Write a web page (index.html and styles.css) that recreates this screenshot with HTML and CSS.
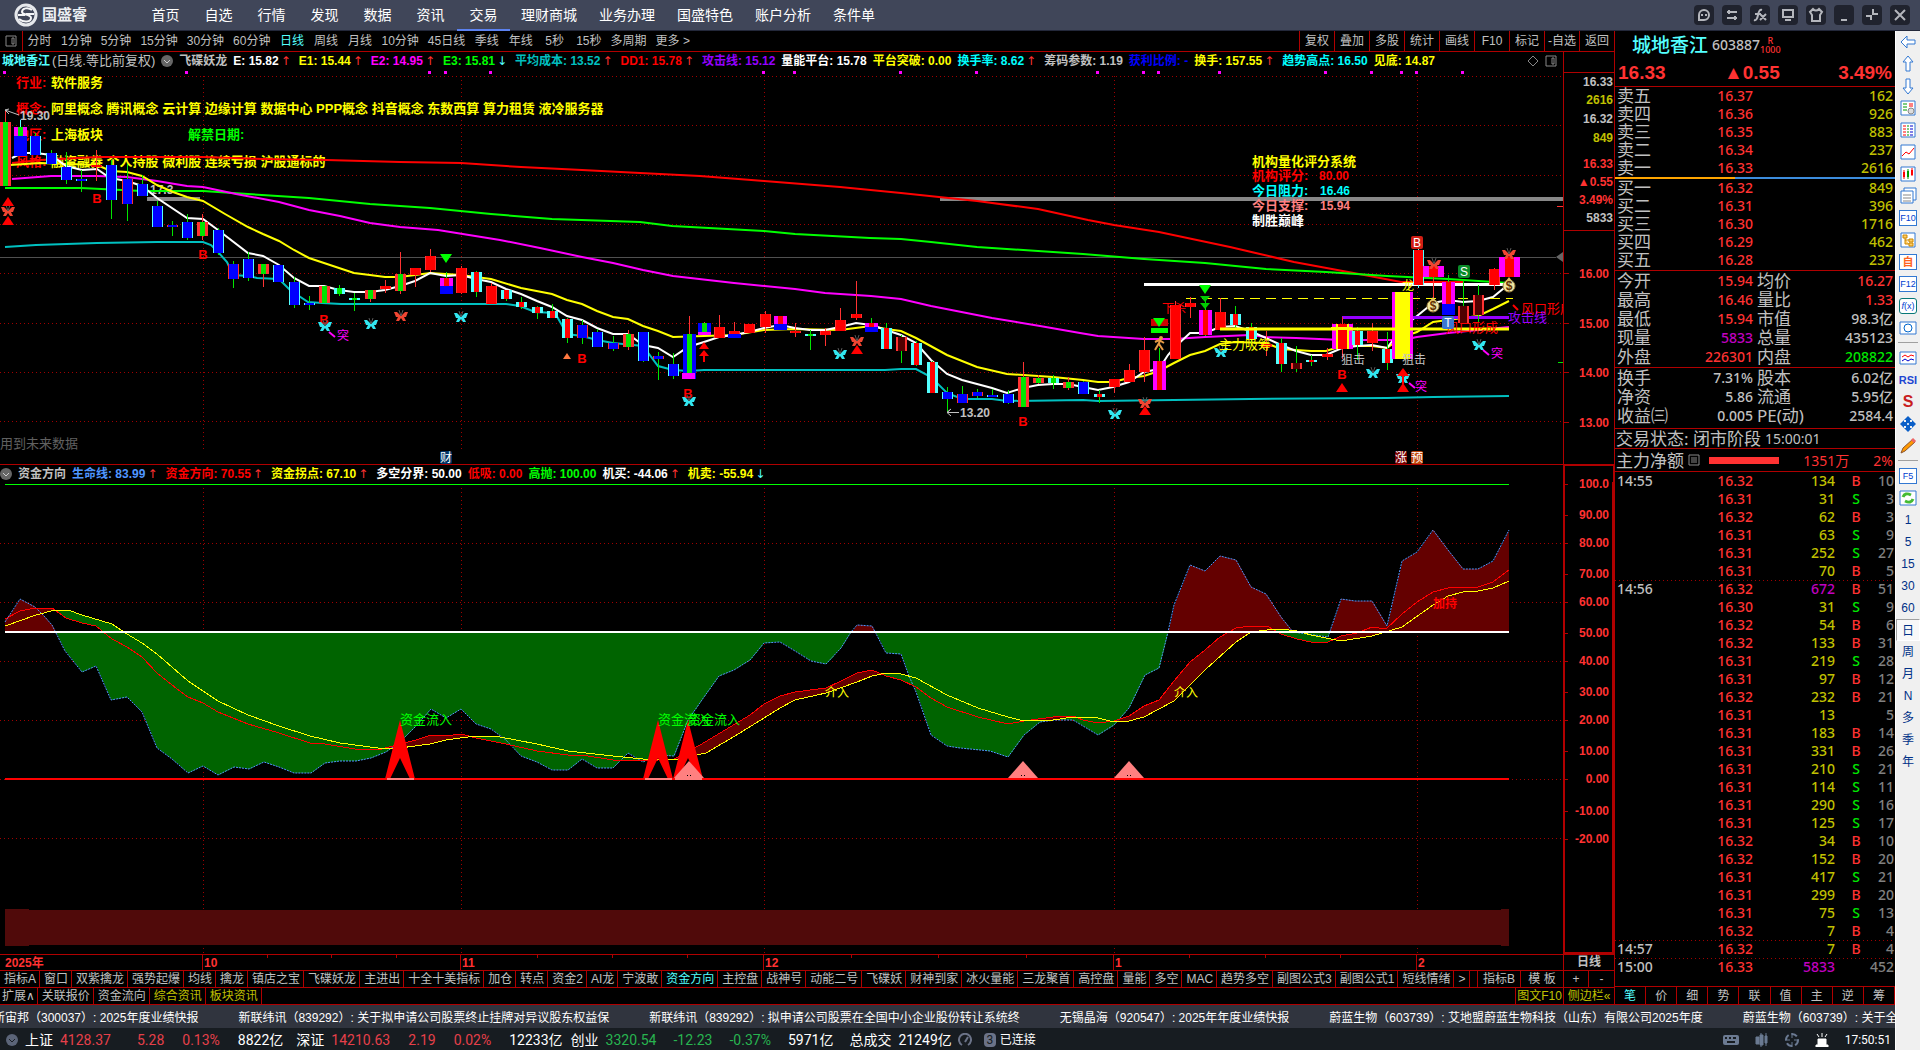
FILE: index.html
```html
<!DOCTYPE html>
<html lang="zh-CN">
<head>
<meta charset="utf-8">
<title>国盛睿 - 城地香江 603887</title>
<link rel="stylesheet" href="styles.css">
</head>
<body>
<header class="topbar">
	<div class="logo">
		<svg width="26" height="24" viewBox="0 0 26 24"><circle cx="13" cy="12" r="10" fill="none" stroke="#e6e8ec" stroke-width="3"/><path d="M19 7C15 4 9 5 9 9c0 3 9 2 9 6 0 4-7 5-12 1M21 11h-8M5 12h7" fill="none" stroke="#f4f5f7" stroke-width="2"/></svg>
		<b>国盛睿</b>
	</div>
	<nav class="nav">
		<a href="#">首页</a><a href="#">自选</a><a href="#">行情</a><a href="#">发现</a><a href="#">数据</a><a href="#">资讯</a><a href="#" class="on">交易</a><a href="#">理财商城</a><a href="#">业务办理</a><a href="#">国盛特色</a><a href="#">账户分析</a><a href="#">条件单</a>
	</nav>
	<div class="winbtns">
		<button aria-label="客服"><svg viewBox="0 0 20 20"><path d="M5 15v-5a5 5 0 1 1 5 5zM8 9v2M12 9v2"/></svg></button>
		<button aria-label="切换"><svg viewBox="0 0 20 20"><path d="M5 7h10M5 13h10M7 5v4M13 11v4"/></svg></button>
		<button aria-label="公式"><svg viewBox="0 0 20 20"><path d="M4 15q3 1 4-5t4-5M5 9h6M10 9l6 6M16 9l-6 6"/></svg></button>
		<button aria-label="屏幕"><svg viewBox="0 0 20 20"><path d="M5 5h10v7H5zM7 15h6"/></svg></button>
		<button aria-label="换肤"><svg viewBox="0 0 20 20"><path d="M7 4q3 3 6 0l3 3-2 3v6H6v-6L4 7z"/></svg></button>
		<button aria-label="最小化"><svg viewBox="0 0 20 20"><path d="M7 15h6"/></svg></button>
		<button aria-label="还原"><svg viewBox="0 0 20 20"><path d="M4 11h5v4M11 4v5h5"/></svg></button>
		<button aria-label="关闭"><svg viewBox="0 0 20 20"><path d="M5 5l10 10M15 5L5 15"/></svg></button>
	</div>
</header>
<div class="body">
<main class="work">
<div class="middle">
<section class="charts">
	<div class="periods">
		<button class="split" aria-label="面板"><svg width="12" height="12" viewBox="0 0 12 12"><path d="M1 1h10v10H1zM7 3h2v6H7z" fill="none" stroke="#888"/></svg></button>
		<div class="plist">
			<button>分时</button><button>1分钟</button><button>5分钟</button><button>15分钟</button><button>30分钟</button><button>60分钟</button><button class="on">日线</button><button>周线</button><button>月线</button><button>10分钟</button><button>45日线</button><button>季线</button><button>年线</button><button>5秒</button><button>15秒</button><button>多周期</button><button>更多 &gt;</button>
		</div>
		<div class="tools">
			<button>复权</button><button>叠加</button><button>多股</button><button>统计</button><button>画线</button><button>F10</button><button>标记</button><button>-自选</button><button>返回</button>
		</div>
	</div>
	<div class="ind">
		<span class="c-cyan">城地香江</span><span class="c-gray thin">(日线.等比前复权)</span>
		<svg class="dd" viewBox="0 0 12 12"><circle cx="6" cy="6" r="6" fill="#666"/><path d="M3 5l3 3 3-3" fill="none" stroke="#ccc"/></svg>
		<span class="c-gray">飞碟妖龙</span>
		<span class="c-white up">E: 15.82</span><span class="c-yel up">E1: 15.44</span><span class="c-mag up">E2: 14.95</span><span class="c-grn down">E3: 15.81</span><span class="c-teal up">平均成本: 13.52</span><span class="c-red up">DD1: 15.78</span><span class="c-pur">攻击线: 15.12</span><span class="c-white">量能平台: 15.78</span><span class="c-yel">平台突破: 0.00</span><span class="c-aqua up">换手率: 8.62</span><span class="c-gray">筹码参数: 1.19</span><span class="c-blue">获利比例: -</span><span class="c-yel up">换手: 157.55</span><span class="c-aqua">趋势高点: 16.50</span><span class="c-yel">见底: 14.87</span>
		<svg class="marks" width="40" height="14" viewBox="0 0 40 14"><path d="M10 2l5 5-5 5-5-5zM23 2h10v10H23zM29 4h2v6h-2z" fill="none" stroke="#888"/></svg>
		<i class="gutter"></i>
	</div>
	<svg class="kline" id="kline" viewBox="0 70 1614 394" preserveAspectRatio="xMinYMin meet"></svg>
	<div class="ind sub">
		<svg class="dd" viewBox="0 0 12 12"><circle cx="6" cy="6" r="6" fill="#666"/><path d="M3 5l3 3 3-3" fill="none" stroke="#ccc"/></svg>
		<span class="c-gray">资金方向</span><span class="c-sky up">生命线: 83.99</span><span class="c-red up">资金方向: 70.55</span><span class="c-yel up">资金拐点: 67.10</span><span class="c-white">多空分界: 50.00</span><span class="c-red">低吸: 0.00</span><span class="c-grn">高抛: 100.00</span><span class="c-white up">机买: -44.06</span><span class="c-yel down">机卖: -55.94</span>
		<i class="gutter thick"></i>
	</div>
	<svg class="fund" id="fund" viewBox="0 482 1614 472" preserveAspectRatio="xMinYMin meet"></svg>
	<div class="dates"><svg id="dates" height="15"></svg><span>日线</span></div>
	<div class="tabs">
		<button>指标A</button><button>窗口</button><button>双紫擒龙</button><button>强势起爆</button><button>均线</button><button>擒龙</button><button>镇店之宝</button><button>飞碟妖龙</button><button>主进出</button><button>十全十美指标</button><button>加仓</button><button>转点</button><button>资金2</button><button>AI龙</button><button>宁波敢</button><button class="on">资金方向</button><button>主控盘</button><button>战神号</button><button>动能二号</button><button>飞碟妖</button><button>财神到家</button><button>冰火量能</button><button>三龙聚首</button><button>高控盘</button><button>量能</button><button>多空</button><button>MAC</button><button>趋势多空</button><button>副图公式3</button><button>副图公式1</button><button>短线情绪</button><button>&gt;</button>
		<div class="right"><button class="w43">指标B</button><button class="w43">模 板</button><button class="w25">+</button><button class="w25">-</button></div>
	</div>
	<div class="tabs ext">
		<button class="more">扩展∧</button><button>关联报价</button><button>资金流向</button><button class="y">综合资讯</button><button class="y">板块资讯</button>
		<div class="right"><button class="y w48">图文F10</button><button class="y w50">侧边栏«</button></div>
	</div>
</section>
<aside class="quote">
	<div class="name"><b>城地香江</b><span>603887</span><small>R<br>1000</small></div>
	<div class="last"><b>16.33</b><b>▲0.55</b><b>3.49%</b></div>
	<table class="book sell">
		<tr><th>卖五</th><td>16.37</td><td>162</td></tr>
		<tr><th>卖四</th><td>16.36</td><td>926</td></tr>
		<tr><th>卖三</th><td>16.35</td><td>883</td></tr>
		<tr><th>卖二</th><td>16.34</td><td>237</td></tr>
		<tr><th>卖一</th><td>16.33</td><td>2616</td></tr>
	</table>
	<div class="ratio"></div>
	<table class="book">
		<tr><th>买一</th><td>16.32</td><td>849</td></tr>
		<tr><th>买二</th><td>16.31</td><td>396</td></tr>
		<tr><th>买三</th><td>16.30</td><td>1716</td></tr>
		<tr><th>买四</th><td>16.29</td><td>462</td></tr>
		<tr><th>买五</th><td>16.28</td><td>237</td></tr>
	</table>
	<table class="info">
		<tr><th>今开</th><td class="r">15.94</td><th>均价</th><td class="r">16.27</td></tr>
		<tr><th>最高</th><td class="r">16.46</td><th>量比</th><td class="r">1.33</td></tr>
		<tr><th>最低</th><td class="r">15.94</td><th>市值</th><td>98.3亿</td></tr>
		<tr><th>现量</th><td class="m">5833</td><th>总量</th><td>435123</td></tr>
		<tr><th>外盘</th><td class="r">226301</td><th>内盘</th><td class="g">208822</td></tr>
	</table>
	<table class="info last3">
		<tr><th>换手</th><td>7.31%</td><th>股本</th><td>6.02亿</td></tr>
		<tr><th>净资</th><td>5.86</td><th>流通</th><td>5.95亿</td></tr>
		<tr><th>收益㈢</th><td>0.005</td><th>PE(动)</th><td>2584.4</td></tr>
	</table>
	<div class="state">交易状态: 闭市阶段 <span>15:00:01</span></div>
	<div class="net">主力净额<svg width="12" height="12" viewBox="0 0 12 12"><path d="M1 1h10v10H1zM3 4h6M3 6h6M3 8h6" fill="none" stroke="#888"/></svg><i></i><span>1351万</span><em>2%</em></div>
	<table class="tape" id="tape"></table>
	<div class="qtabs"><button class="on">笔</button><button>价</button><button>细</button><button>势</button><button>联</button><button>值</button><button>主</button><button>逆</button><button>筹</button></div>
</aside>
</div>
<div class="ticker">
	<a href="#">新宙邦（300037）: 2025年度业绩快报</a><a href="#">新联纬讯（839292）: 关于拟申请公司股票终止挂牌对异议股东权益保</a><a href="#">新联纬讯（839292）: 拟申请公司股票在全国中小企业股份转让系统终</a><a href="#">无锡晶海（920547）: 2025年年度业绩快报</a><a href="#">蔚蓝生物（603739）: 艾地盟蔚蓝生物科技（山东）有限公司2025年度</a><a href="#">蔚蓝生物（603739）: 关于全</a>
</div>
<footer class="status">
	<svg class="dd" viewBox="0 0 12 12"><circle cx="6" cy="6" r="6" fill="#5b6478"/><path d="M3 5l3 3 3-3" fill="none" stroke="#1a1e24"/></svg>
	<div class="idx up"><b>上证</b><span class="p">4128.37</span><span>5.28</span><span>0.13%</span><b>8822亿</b></div>
	<div class="idx up"><b>深证</b><span class="p">14210.63</span><span>2.19</span><span>0.02%</span><b>12233亿</b></div>
	<div class="idx dn"><b>创业</b><span>3320.54</span><span>-12.23</span><span>-0.37%</span><b>5971亿</b></div>
	<div class="idx total"><b>总成交</b><b>21249亿</b></div>
	<svg width="14" height="14" viewBox="0 0 14 14"><path d="M4 12a6 6 0 1 1 6 0M7 9l3-5" fill="none" stroke="#6b7388" stroke-width="2"/></svg>
	<span class="num">3</span><span class="conn">已连接</span>
	<div class="sysicons">
		<svg width="16" height="12" viewBox="0 0 16 12"><rect y="1" width="16" height="10" rx="2" fill="#6b7a92"/><path d="M2 4h2M6 4h2M10 4h3M4 8h8" stroke="#171c21" stroke-width="2"/></svg>
		<svg width="14" height="14" viewBox="0 0 14 14"><path d="M1 4h3v7H1zM5 2h3v10H5zM10 3h2v7h-2zM11 0v13M6 0v14" fill="#6b7a92" stroke="#6b7a92"/></svg>
		<svg width="14" height="14" viewBox="0 0 14 14"><circle cx="7" cy="7" r="6" fill="none" stroke="#6b7a92" stroke-width="2" stroke-dasharray="6 3"/><path d="M7 0v5M7 9v5M0 7h5M9 7h5" stroke="#6b7a92"/></svg>
		<svg width="14" height="14" viewBox="0 0 14 14"><path d="M3 6h8v6H3zM1 12h12v2H1zM2 1l2 3M7 0v4M12 1l-2 3" fill="#fff" stroke="#fff"/></svg>
		<time>17:50:51</time>
	</div>
</footer>
</main>
<aside class="strip">
	<button aria-label="返回"><svg viewBox="0 0 20 20"><path class="l" d="M3 10l6-6v4h8v4H9v4z"/></svg></button>
	<button aria-label="上翻"><svg viewBox="0 0 20 20"><path class="l" d="M10 2l5 6h-3v9H8V8H5z"/></svg></button>
	<button aria-label="下翻"><svg viewBox="0 0 20 20"><path class="l" d="M10 18l5-6h-3V3H8v9H5z"/></svg></button>
	<button aria-label="行情表"><svg viewBox="0 0 20 20"><path class="l" d="M3 3h14v14H3z"/><path d="M5 6h4M5 9h4M5 12h4" stroke="#090"/><path d="M11 6h4M11 8h4" stroke="red"/><circle cx="13" cy="13" r="3" fill="#ddd" stroke="#888"/></svg></button>
	<button aria-label="报价"><svg viewBox="0 0 20 20"><path class="l" d="M3 3h14v14H3z"/><path d="M5 6h3M5 9h3M5 12h3M5 15h3" stroke="red"/><path d="M9 6h2M9 9h2M9 12h2M9 15h2" stroke="#090"/><path d="M12 6h3M12 9h3M12 12h3M12 15h3" stroke="#00c"/></svg></button>
	<button aria-label="分时图"><svg viewBox="0 0 20 20"><path class="l" d="M3 3h14v14H3z"/><path d="M4 14l4-4 3 2 5-6" stroke="red" fill="none"/></svg></button>
	<button aria-label="K线图"><svg viewBox="0 0 20 20"><path class="l" d="M3 3h14v14H3z"/><path d="M6 6v9M14 4v8" stroke="red"/><path d="M10 5v10" stroke="#090"/><path d="M5 8h2v5H5zM13 6h2v5h-2z" fill="red"/><path d="M9 7h2v6H9z" fill="#090"/></svg></button>
	<button aria-label="窗口"><svg viewBox="0 0 20 20"><path class="l" d="M6 2h12v12H6z"/><path class="l" d="M3 5h12v12H3z"/><path d="M5 9h8M5 12h8M5 15h8" stroke="#888"/></svg></button>
	<button class="box">F10</button>
	<button aria-label="结构"><svg viewBox="0 0 20 20"><path class="l" d="M3 3h14v14H3z"/><path d="M5 5h4v3H5zM11 9h4v3h-4zM11 13h4v3h-4zM7 8v6h4M7 10h4" fill="#fc6" stroke="#c80"/></svg></button>
	<button class="box org">自</button>
	<button class="box">F12</button>
	<button class="box fx"><i>f</i>(x)</button>
	<button aria-label="圈"><svg viewBox="0 0 20 20"><path class="l" d="M2 4h16v12H2z"/><circle cx="10" cy="10" r="4" fill="none" stroke="#06c"/></svg></button>
	<hr>
	<button aria-label="叠加"><svg viewBox="0 0 20 20"><path class="l" d="M2 4h16v12H2z"/><path d="M4 9l3-2 3 2 3-2 3 1" stroke="red" fill="none"/><path d="M4 13l3-2 3 2 3-2 3 1" stroke="#00c" fill="none"/></svg></button>
	<button class="rsi">RSI</button>
	<button class="dollar">S</button>
	<button aria-label="移动"><svg viewBox="0 0 20 20"><path d="M10 2l4 4h-2v2h2V6l4 4-4 4v-2h-2v2h2l-4 4-4-4h2v-2H6v2l-4-4 4-4v2h2V6H6z" fill="#0a5fc8"/><circle cx="10" cy="10" r="1" fill="#fff"/></svg></button>
	<button aria-label="画线"><svg viewBox="0 0 20 20"><path d="M3 17l2-5L15 3l2 3L7 15z" fill="#f90" stroke="#853"/><path d="M14 3l3 3" stroke="#e66" stroke-width="3"/></svg></button>
	<hr>
	<button class="box">F5</button>
	<button aria-label="刷新"><svg viewBox="0 0 20 20"><path class="l" d="M2 3h16v14H2z"/><path d="M5 9q2-5 8-2M15 11q-2 5-8 2" fill="none" stroke="#4b3" stroke-width="3"/></svg></button>
	<button>1</button><button>5</button><button>15</button><button>30</button><button>60</button><button class="on">日</button><button>周</button><button>月</button><button>N</button><button>多</button><button>季</button><button>年</button>
</aside>
</div>
<script src="script.js"></script>
</body>
</html>
```
FILE: styles.css
```css
* {
	box-sizing:border-box;
}
body {
	margin:0;
	height:100vh;
	display:flex;
	flex-direction:column;
	overflow:hidden;
	background:#000;
	color:#c0c0c0;
	font:12px/16px 'Liberation Sans','Noto Sans CJK SC',sans-serif;
}
button {
	margin:0;
	padding:0;
	border:0;
	background:none;
	color:inherit;
	font:inherit;
	white-space:nowrap;
}
a {
	color:inherit;
	text-decoration:none;
}
table {
	border-collapse:separate;
	border-spacing:0;
	width:100%;
	table-layout:fixed;
}
th, td {
	padding:0;
	font-weight:normal;
}
.topbar {
	flex:none;
	display:flex;
	align-items:center;
	height:31px;
	background:#404659;
	border-bottom:1px solid #23283a;
	color:#fff;
}
.logo {
	display:flex;
	align-items:center;
	width:139px;
	padding-left:13px;
	gap:3px;
	font-size:15px;
	color:#eceef2;
}
.nav {
	display:flex;
	font-size:14px;
	line-height:30px;
}
.nav a {
	min-width:53px;
	padding:0 11px;
	text-align:center;
}
.nav .on {
	border-bottom:2px solid #5c82f0;
	line-height:28px;
	padding-top:1px;
}
.winbtns {
	display:flex;
	gap:8px;
	margin-left:auto;
	padding-right:10px;
}
.winbtns button {
	width:20px;
	height:20px;
	border-radius:4px;
	background:#20232e;
}
.winbtns svg {
	display:block;
	fill:none;
	stroke:#b4b6bc;
	stroke-width:2;
}
.body {
	flex:1;
	display:flex;
	min-height:0;
}
.work {
	flex:1;
	min-width:0;
	display:flex;
	flex-direction:column;
}
.middle {
	flex:1;
	display:flex;
	min-height:0;
}
.charts {
	flex:1;
	min-width:0;
	display:flex;
	flex-direction:column;
	border-right:1px solid #b00000;
}
.periods {
	flex:none;
	display:flex;
	height:21px;
	border-bottom:1px solid #b00000;
	line-height:20px;
}
.split {
	width:23px;
	border-right:1px solid #b00000;
	line-height:0;
}
.plist {
	display:flex;
	gap:9px;
	padding-left:4px;
}
.plist button {
	min-width:25px;
}
.periods .on, .tabs .on, .qtabs .on {
	color:#54ffff;
}
.tools {
	display:flex;
	margin-left:auto;
}
.tools button {
	width:35px;
	border-left:1px solid #b00000;
}
.ind {
	flex:none;
	display:flex;
	align-items:center;
	gap:6px;
	height:18px;
	padding-left:2px;
	line-height:18px;
	font-weight:bold;
	white-space:nowrap;
	overflow:hidden;
}
.ind .thin {
	margin-left:-4px;
	font-size:13px;
	font-weight:normal;
}
.ind.sub {
	padding-left:0;
	border-top:1px solid #b00000;
	line-height:16px;
}
.dd {
	flex:none;
	width:12px;
	height:12px;
}
.up::after, .down::after {
	content:'↑';
	margin:0 2px;
	color:#ff3232;
	font-family:'DejaVu Sans';
	font-weight:normal;
}
.down::after {
	content:'↓';
	color:#54ffff;
}
.idx::after {
	display:none;
}
.marks {
	margin-left:auto;
}
.gutter {
	width:51px;
	align-self:stretch;
	margin-left:-6px;
	border-left:1px solid #b00000;
}
.gutter.thick {
	margin-left:auto;
	border:2px solid #b00000;
	border-width:1px 1px 0 2px;
}
.c-cyan { color:#54ffff; }
.c-gray { color:#c0c0c0; }
.c-white { color:#fff; }
.c-yel { color:#ff0; }
.c-mag { color:#f0f; }
.c-grn { color:#0f0; }
.c-teal { color:#00c0c0; }
.c-red { color:#f00; }
.c-pur { color:#9500ff; }
.c-aqua { color:#0ff; }
.c-blue { color:#00f; }
.c-sky { color:#5096ff; }
.kline, .fund {
	display:block;
	width:100%;
	min-height:0;
	font:bold 12px 'Liberation Sans','Noto Sans CJK SC',sans-serif;
}
.kline {
	flex:394 1 0;
}
.fund {
	flex:472 1 0;
	overflow:visible;
}
.big {
	font-size:13px;
}
.norm {
	font-weight:normal;
}
.dates {
	flex:none;
	display:flex;
	height:16px;
	border-top:1px solid #b00000;
	line-height:15px;
}
.dates svg {
	flex:1;
	min-width:0;
	font:bold 12px 'Liberation Sans','Noto Sans CJK SC',sans-serif;
}
.dates span {
	width:51px;
	text-align:center;
	border-left:1px solid #b00000;
	font-weight:bold;
}
.tabs {
	flex:none;
	display:flex;
	height:17px;
	border-top:1px solid #b00000;
	line-height:16px;
	overflow:hidden;
}
.tabs button {
	padding:0 3px 0 4px;
	border-right:1px solid #b00000;
}
.tabs.ext {
	height:18px;
	border-bottom:1px solid #b00000;
}
.tabs .more {
	padding:0 2px;
	font-family:'DejaVu Sans','Noto Sans CJK SC',sans-serif;
}
.tabs .y {
	color:#c0c000;
}
.tabs .right {
	display:flex;
	margin-left:auto;
	border-left:1px solid #b00000;
}
.tabs .right button {
	padding:0;
}
.right button:last-child {
	border-right:0;
}
.w43 {
	width:43px;
}
.w25 {
	width:25px;
}
.w48 {
	width:48px;
}
.w50 {
	width:50px;
}
.quote {
	flex:none;
	display:flex;
	flex-direction:column;
	width:280px;
	font:500 14px/18px 'Noto Sans','Noto Sans CJK SC',sans-serif;
}
.name {
	display:flex;
	align-items:center;
	height:28px;
	padding-left:17px;
	color:#c0c0c0;
}
.name b {
	color:#54ffff;
	font-size:19px;
	font-weight:500;
	margin-right:4px;
}
.name small {
	color:#ff3232;
	font-size:9px;
	line-height:9px;
	text-align:center;
}
.last {
	display:flex;
	align-items:center;
	justify-content:space-between;
	height:28px;
	padding:0 3px;
	border-bottom:1px solid #b00000;
	color:#ff3232;
	font:bold 19px/26px 'Liberation Sans','DejaVu Sans',sans-serif;
}
.quote th {
	padding-left:2px;
	text-align:left;
	font-size:17px;
	white-space:nowrap;
}
.quote td {
	text-align:right;
	padding-right:2px;
	font-weight:500;
}
.book tr {
	height:18px;
}
.book td {
	color:#c0c000;
}
.book td:nth-child(2) {
	color:#ff3232;
	padding-right:0;
}
.book th {
	width:60px;
}
.book td:nth-child(2) {
	width:78px;
}
.ratio {
	flex:none;
	height:2px;
	background:linear-gradient(to right, #ffa500 43%, #3c8cdc 43%);
}
.info {
	border-top:1px solid #b00000;
	margin-top:1px;
}
.info tr {
	height:19px;
}
.info th, .info td {
	width:68px;
}
.last3 {
	margin-bottom:3px;
}
.state, .net {
	flex:none;
	display:flex;
	align-items:center;
	padding-left:1px;
	border-top:1px solid #b00000;
	font-size:17px;
	font-weight:400;
	line-height:19px;
	height:20px;
	gap:4px;
}
.state span {
	font-size:14px;
}
.net {
	height:24px;
	padding-right:2px;
	border-bottom:1px solid #b00000;
}
.net i {
	width:70px;
	height:7px;
	margin-left:5px;
	background:#ff3232;
}
.net span, .net em {
	color:#ff3232;
	font-size:14px;
	font-style:normal;
	margin-left:auto;
}
.tape tr {
	height:18px;
}
.tape td {
	padding:0;
}
.tape td:nth-child(1) {
	width:50px;
	text-align:left;
	padding-left:2px;
}
.tape td:nth-child(2) {
	width:88px;
	color:#ff3232;
}
.tape td:nth-child(3) {
	width:82px;
	color:#c0c000;
}
.tape td:nth-child(4) {
	width:34px;
	padding-left:8px;
	text-align:center;
}
.tape td:nth-child(5) {
	color:#808080;
	padding-right:1px;
}
.quote .r {
	color:#ff3232;
}
.quote .g {
	color:#00e600;
}
.quote td.m, .tape td.m:nth-child(3) {
	color:#c000c0;
}
.tape .dot {
	background:linear-gradient(to right, #a00000 1px, transparent 1px) 0 0 / 4px 1px repeat-x;
}
.qtabs {
	flex:none;
	display:flex;
	height:19px;
	margin-top:auto;
	border:1px solid #b00000;
	border-width:1px 0;
	font-size:12px;
	font-weight:400;
	line-height:17px;
}
.qtabs button {
	flex:1;
	border-right:1px solid #b00000;
}
.ticker {
	flex:none;
	display:flex;
	gap:40px;
	height:23px;
	overflow:hidden;
	background:#30343e;
	color:#fff;
	line-height:26px;
	white-space:nowrap;
}
.ticker a:first-child {
	margin-left:-7px;
}
.status {
	flex:none;
	display:flex;
	align-items:center;
	height:22px;
	padding:2px 0 0 6px;
	background:#171c21;
	color:#fff;
	font:14px/20px Roboto,'Noto Sans CJK SC',sans-serif;
	white-space:nowrap;
}
.idx {
	display:flex;
	gap:18px;
	padding-left:7px;
	margin-right:6px;
}
.idx b:first-child {
	margin-right:-11px;
}
.idx .p {
	min-width:59px;
}
.idx.up {
	color:#e6404a;
}
.idx.dn {
	color:#28b450;
}
.idx b {
	color:#fff;
	font-weight:normal;
}
.idx.dn {
	gap:17px;
	padding-left:2px;
}
.idx.dn b:first-child {
	margin-right:-10px;
}
.idx.total {
	padding-left:10px;
}
.num {
	width:12px;
	height:14px;
	margin:0 4px 0 12px;
	border-radius:4px;
	background:#6b7388;
	color:#171c21;
	font-size:12px;
	line-height:14px;
	text-align:center;
}
.conn {
	font-size:12px;
}
.sysicons {
	display:flex;
	align-items:center;
	gap:16px;
	margin-left:auto;
	padding-right:4px;
}
.sysicons time {
	font-size:12px;
}
.strip {
	flex:none;
	display:flex;
	flex-direction:column;
	width:25px;
	background:#f0f0f0;
	border-left:1px solid #fff;
	color:#003087;
}
.strip button {
	width:24px;
	height:22px;
	font-size:12px;
	line-height:22px;
	text-align:center;
}
.strip svg {
	display:block;
	width:20px;
	height:20px;
	margin:1px 2px;
}
.strip .l {
	fill:#fff;
	stroke:#3278d2;
}
.strip hr {
	width:20px;
	height:1px;
	margin:3px 2px 4px;
	border:0;
	background:#a0a0a0;
}
.strip .box {
	width:18px;
	height:16px;
	margin:3px;
	background:#fff;
	border:1px solid #3278d2;
	color:#0040d0;
	font-size:9px;
	line-height:14px;
}
.strip .org {
	color:#ff6420;
	font-size:11px;
	font-weight:bold;
}
.strip .fx {
	border-color:#087878;
	border-radius:3px;
}
.strip .rsi {
	color:#1e46d2;
	font-size:11px;
	font-weight:bold;
}
.strip .dollar {
	color:#c81e1e;
	font-size:16px;
	font-weight:bold;
}
.strip .on {
	border:1px solid #a0a0a0;
	border-color:#a0a0a0 #fff #fff #a0a0a0;
	background:#f8f8f8;
}
```
FILE: script.js
```js
var X0 = 5, STEP = 15.19;
var RED = '#ff3232', CYAN = '#54ffff', BLUE = '#0000ff', GREEN = '#00e600', MAG = '#ff00ff', GRID = '#a00000';

// wick top, body top, body bottom, wick bottom, style
var bars = [
[111,122,186,186,'rg'],[120,127,156,156,'mg'],[133,136,155,155,'b'],[150,153,164,165,'b'],[152,167,180,184,'b'],[170,179,181,192,'b'],[150,165,167,181,'r'],[160,165,200,219,'b'],[164,179,204,221,'rb'],[175,184,196,196,'b'],
[201,206,227,227,'b'],[221,225,227,236,'rb'],[214,222,238,240,'b'],[214,222,236,240,'rg'],[228,230,253,255,'b'],[261,264,279,288,'rb'],[252,259,278,281,'b'],[264,264,274,287,'rg'],[265,265,282,282,'b'],[277,282,305,308,'b'],
[296,303,304,310,'b'],[286,286,303,303,'rg'],[285,288,294,296,'cg'],[293,298,299,311,'cg'],[290,290,299,302,'rg'],[280,286,289,293,'r'],[252,274,291,294,'rg'],[268,268,275,287,'r'],[249,256,270,272,'r'],[272,278,294,294,'mr'],
[266,268,293,294,'r'],[271,272,292,297,'cr'],[283,286,304,304,'r'],[290,290,299,301,'cr'],[297,302,307,309,'cr'],[306,307,313,319,'cr'],[304,311,318,318,'cr'],[318,319,338,343,'cr'],[320,325,338,344,'rb'],[329,332,347,347,'b'],
[336,343,349,351,'rb'],[330,334,347,350,'rg'],[332,332,361,362,'b'],[352,356,359,380,'rb'],[353,364,376,379,'b'],[316,334,379,379,'bg'],[322,323,335,335,'bg'],[315,327,338,338,'r'],[322,331,338,338,'r'],[324,324,333,333,'r'],
[311,314,327,333,'r'],[316,316,330,330,'mr'],[323,331,332,337,'r'],[330,334,336,350,'cg'],[328,331,335,346,'r'],[308,320,331,331,'r'],[281,314,318,320,'r'],[318,323,332,332,'mr'],[323,328,349,349,'cr'],[335,337,351,363,'rh'],
[341,343,365,366,'cr'],[361,362,393,393,'cr'],[387,392,399,412,'b'],[386,394,403,403,'rb'],[389,392,396,398,'rb'],[389,395,397,397,'b'],[390,394,403,404,'b'],[362,377,407,407,'rg'],[375,378,383,384,'rg'],[375,378,383,389,'cg'],
[377,382,388,390,'rg'],[381,382,394,394,'b'],[390,394,397,403,'cr'],[379,379,387,393,'r'],[364,370,382,382,'r'],[337,350,372,382,'r'],[348,361,390,390,'mr'],[301,305,359,359,'r'],[297,303,307,318,'r'],[300,310,335,336,'mr'],
[298,312,330,330,'r'],[306,314,325,329,'cr'],[323,327,339,343,'cr'],[331,344,347,356,'r'],[338,343,364,372,'cr'],[346,363,369,372,'rh'],[355,360,361,366,'cr'],[348,354,357,360,'r'],[317,324,349,359,'wm'],[327,331,345,360,'cr'],
[323,331,343,351,'r'],[332,349,363,370,'cr'],[292,292,359,359,'wy'],[249,250,285,288,'cr2'],[266,266,277,298,'w'],[275,282,304,315,'mr'],[280,306,323,323,'rh'],[285,295,315,322,'rh'],[268,269,285,290,'r'],[257,257,277,277,'w']
];
// outer colour, outer width, inner colour, inner width, wick colour
var styles = {
	b:[CYAN,11,BLUE,9,GREEN], rb:[RED,11,BLUE,9,GREEN], rg:[RED,11,GREEN,5,RED], r:[RED,11,'#ff0000',9,RED],
	cr:[CYAN,11,'#ff0000',5,GREEN], cr2:[CYAN,11,'#ff0000',9,CYAN], cg:[CYAN,11,GREEN,5,GREEN], mr:[MAG,13,'#ff0000',5,GREEN], mg:[MAG,13,GREEN,5,CYAN],
	bg:[BLUE,13,GREEN,5,RED], rh:[RED,11,'#500000',7,GREEN], w:[MAG,21,'#ff0000',9,RED], wm:[MAG,21,'#ffff00',13,RED], wy:[MAG,21,'#ffff00',15,MAG]
};

function line(pts, c, w, extra) {
	return '<polyline points="' + pts + '" fill="none" stroke="' + c + '" stroke-width="' + (w || 2) + '" ' + (extra || '') + '/>';
}
function rect(x, y, w, h, c) {
	return '<rect x="' + x + '" y="' + y + '" width="' + w + '" height="' + h + '" fill="' + c + '"/>';
}
function text(x, y, s, c, cls, anchor) {
	return '<text x="' + x + '" y="' + y + '" fill="' + c + '" class="' + (cls || '') + '" text-anchor="' + (anchor || 'start') + '">' + s + '</text>';
}
function tri(x, y, w, h, c) {
	return '<path d="M' + x + ' ' + y + 'l' + w + ' ' + h + 'h' + (-2 * w) + 'z" fill="' + c + '"/>';
}
function fly(x, y, c) {
	return '<g transform="translate(' + x + ' ' + y + ')"><path d="M0 0L-4 -4L-7 -4L-5 1L-3 1L-5 5L-2 5L0 2L2 5L5 5L3 1L5 1L7 -4L4 -4Z" fill="' + c + '"/><path d="M0 0L-2 -6M0 0L2 -6" stroke="#555" fill="none"/></g>';
}
function badge(x, y, s, c) {
	return '<rect x="' + (x - 6) + '" y="' + (y - 6) + '" width="12" height="13" rx="2" fill="' + c + '"/>' + text(x, y + 5, s, '#fff', 'norm', 'middle');
}
function bag(x, y) {
	return '<circle cx="' + x + '" cy="' + y + '" r="6" fill="#f0e6a0" stroke="#a08040"/>' + tri(x, y - 9, 3, 4, '#e0c060') + text(x, y + 4, '$', '#643200', '', 'middle');
}

function drawKline() {
	var s = '<clipPath id="pane"><rect x="0" y="70" width="1563" height="394"/></clipPath>', i, y;
	for (i = 0; i < 8; i++) {
		y = Math.round(76 + i * 49.35) + 0.5;
		s += line('0,' + y + ' 1563,' + y, GRID, 1, 'stroke-dasharray="1 3"');
	}
	[203, 461, 764, 1114, 1417].forEach(function(x) {
		s += line((x + 0.5) + ',76 ' + (x + 0.5) + ',450', GRID, 1, 'stroke-dasharray="1 3"');
	});
	[4,186,429,445,490,763,794,900,976,1097,1143,1158,1219,1325,1371,1401,1416,1462].forEach(function(x) {
		s += rect(x - 1, 71, 3, 3, MAG);
	});
	s += line('0,257.5 1556,257.5', '#505050', 1) + '<path d="M1556 257l7-5v10z" fill="#666"/>';
	s += text(16, 87, '行业:', '#f00', 'big') + text(51, 87, '软件服务', '#ff0', 'big');
	s += text(16, 113, '概念:', '#f00', 'big') + text(51, 113, '阿里概念 腾讯概念 云计算 边缘计算 数据中心 PPP概念 抖音概念 东数西算 算力租赁 液冷服务器', '#ff0', 'big');
	s += text(16, 139, '地区:', '#f00', 'big') + text(51, 139, '上海板块', '#ff0', 'big') + text(188, 139, '解禁日期:', '#0f0', 'big');
	s += text(16, 166, '风格:', '#f00', 'big') + text(51, 166, '融资融券 个人持股 微利股 连续亏损 沪股通标的', '#ff0', 'big');
	s += text(1252, 166, '机构量化评分系统', '#ff0', 'big') + text(1252, 180, '机构评分:', '#f00', 'big') + text(1319, 180, '80.00', '#f00');
	s += text(1252, 195, '今日阻力:', '#0ff', 'big') + text(1320, 195, '16.46', '#0ff');
	s += text(20, 120, '19.30', '#c0c0c0') + line('19,115 5,110 9,114 5,110 9,109', '#c0c0c0', 1) + text(150, 194, '17.3', '#c0c0c0');
	s += line('147,199 200,199', '#888', 4) + line('940,199 1563,199', '#888', 4);
	s += text(1252, 210, '今日支撑:', '#ff8080', 'big') + text(1320, 210, '15.94', '#ff8080') + text(1252, 225, '制胜巅峰', '#fff', 'big');

	s += line('12,163 40,160 97,157 203,157 264,159 326,160 400,162 461,163 521,167 582,170 640,173 700,176 764,181 840,187 901,193 977,201 1038,209 1088,220 1114,225 1159,232 1230,247 1294,262 1359,274 1401,282 1463,282', '#f00');
	s += line('5,188 81,188 142,191 203,191 248,194 309,198 370,204 430,208 491,214 552,219 640,222 672,226 764,231 795,234 870,238 901,239 931,242 977,247 1038,251 1083,254 1144,259 1205,263 1266,269 1326,272 1387,276 1448,279 1509,283', '#0f0');
	s += line('12,179 51,176 97,176 127,177 157,181 187,186 203,187 236,194 279,202 309,210 340,216 370,223 400,227 438,230 500,240 540,248 582,257 613,263 643,270 673,276 734,283 795,289 825,293 871,296 901,299 931,306 992,318 1040,326 1080,333 1098,336 1144,339 1174,339 1205,337 1250,335 1266,337 1296,338 1342,340 1402,340 1417,337 1448,333 1478,330 1509,327', MAG);
	s += line('5,247 36,245 97,243 157,242 203,242 211,245 218,252 227,262 233,275 248,276 257,278 279,279 290,290 308,302 322,303 341,304 506,304 520,306 535,312 555,313 567,334 582,336 597,340 613,343 643,346 658,366 673,370 688,371 704,370 885,370 901,369 916,369 931,377 947,393 962,399 992,399 1007,401 1083,400 1098,401 1250,399 1387,398 1433,397 1509,396', '#00c0c0');
	s += line('10,165 40,163 97,165 111,171 127,172 142,176 157,185 173,192 187,197 203,201 225,214 248,227 263,234 279,241 294,250 309,258 324,263 339,268 354,273 370,275 385,277 400,277 430,273 461,275 491,279 521,288 552,294 567,300 582,304 597,311 613,317 628,319 643,326 658,331 673,337 704,336 734,335 764,330 795,329 840,330 871,326 886,329 901,331 916,338 947,355 977,367 1007,374 1053,377 1083,380 1098,382 1113,382 1129,378 1144,376 1159,371 1174,363 1190,355 1205,351 1220,344 1235,342 1266,343 1281,349 1311,351 1326,351 1342,346 1372,346 1387,348 1402,337 1417,332 1433,322 1448,320 1463,318 1478,316 1493,309 1509,301', '#ff0');
	s += line('12,158 22,153 36,153 51,155 66,166 82,170 97,169 110,178 127,181 142,186 157,198 187,218 203,219 218,230 248,253 263,256 279,265 294,278 309,286 324,286 339,290 354,292 370,292 385,290 400,286 415,281 430,273 446,276 461,275 476,279 491,282 506,289 521,294 537,301 552,307 567,316 582,320 597,328 613,334 628,334 643,345 658,348 673,357 688,347 704,342 719,337 734,335 749,332 764,328 780,325 795,328 810,330 825,330 840,327 856,323 871,325 886,330 901,335 916,343 931,360 947,374 962,380 977,384 992,388 1007,393 1023,388 1038,385 1053,384 1068,384 1083,387 1098,390 1113,387 1129,382 1144,372 1159,369 1168,355 1174,348 1190,333 1205,333 1220,327 1235,326 1250,331 1266,338 1281,345 1296,351 1311,355 1326,355 1342,348 1357,346 1372,345 1387,348 1402,328 1417,316 1433,303 1448,300 1463,302 1478,301 1493,297 1509,284', '#fff');
	s += line('1144,284.5 1509,284.5', '#fff', 3) + line('1342,317.5 1509,317.5', '#9500ff', 3) + line('1186,298.5 1513,298.5', '#ff0', 1, 'stroke-dasharray="10 6"');

	bars.forEach(function(b, n) {
		var x = Math.round(X0 + n * STEP), st = styles[b[4]], h = Math.max(b[2] - b[1], 2);
		s += rect(x, b[0], 1, b[3] - b[0], st[4]);
		s += rect(x - (st[1] - 1) / 2, b[1], st[1], h, st[0]) + rect(x - (st[3] - 1) / 2, b[1], st[3], h, st[2]);
	});
	// second halves of the two-colour bars
	s += rect(14, 136, 13, 20, BLUE) + rect(440, 286, 13, 8, BLUE) + rect(682, 373, 13, 6, MAG) + rect(698, 332, 13, 3, MAG) + rect(728, 334, 13, 4, BLUE) + rect(774, 324, 13, 6, BLUE) + rect(865, 327, 13, 5, BLUE) + rect(1442, 304, 13, 11, BLUE);
	s += line('1220,329 1509,329', '#ff0', 3) + rect(1338, 324, 9, 25, '#f00') + rect(1331, 327, 21, 3, '#ff0');

	[[97,203],[203,259],[324,324],[582,363],[688,398],[1023,426],[1342,379]].forEach(function(p) { s += text(p[0], p[1], 'B', '#f00', 'big', 'middle'); });
	[[325,326],[371,324],[461,317],[840,354],[689,401],[1115,414],[1221,352],[1373,373],[1403,378],[1479,345]].forEach(function(p) { s += fly(p[0], p[1], '#32e6f0'); });
	[[401,316],[857,341],[1145,403],[1434,264],[1509,254],[8,211]].forEach(function(p) { s += fly(p[0], p[1], '#f04632'); });
	[[8,197],[8,216],[857,345],[1145,406],[1342,383],[1403,383]].forEach(function(p) { s += tri(p[0], p[1], 6, 9, '#f00'); });
	s += tri(704, 342, 5, 7, '#f00') + tri(704, 350, 5, 6, '#f00') + rect(703, 354, 2, 8, '#f00') + tri(1403, 368, 6, 8, '#f00') + rect(1402, 370, 2, 14, '#f00') + tri(567, 353, 4, 6, '#ff7840');
	s += tri(446, 263, 6, -9, '#0f0') + rect(1151, 319, 17, 7, '#c00') + tri(1159, 327, 6, -9, '#0f0') + rect(1151, 328, 17, 5, '#0f0') + tri(1205, 294, 6, -9, '#0f0') + tri(1205, 302, 5, -6, '#0c0') + tri(1205, 309, 5, -6, '#0c0');
	s += '<circle cx="1161" cy="338" r="2" fill="#e69b46"/><path d="M1160 339l-1 5 4 6M1159 343l-4 7M1155 342l4-2 5 3" stroke="#e69b46" stroke-width="2" fill="none"/>';
	s += text(337, 340, '突', MAG, 'norm') + text(1491, 358, '突', MAG, 'norm') + text(1415, 391, '突', MAG, 'norm');
	[[329,332],[1483,350],[1409,383]].forEach(function(p) { s += line(p[0] + ',' + p[1] + ' ' + (p[0] + 6) + ',' + (p[1] + 5), MAG, 2); });
	s += text(1162, 313, '下杀', '#f00', 'norm') + text(1402, 290, '龙', '#ff0', 'norm') + text(1219, 349, '主力吸筹', '#ff0', 'big norm') + text(1341, 364, '狙击', '#c0c0c0', 'norm') + text(1402, 364, '狙击', '#c0c0c0', 'norm');
	s += '<g clip-path="url(#pane)">' + text(1521, 313, '风口形成', '#f00', 'big norm') + '</g>' + text(1446, 332, '风口形成', '#f00', 'big norm') + line('1513,305 1518,310', '#f00', 2) + text(1508, 322, '攻击线', '#9500ff', 'big norm');
	s += badge(1417, 242, 'B', '#d21e14') + badge(1464, 271, 'S', '#0a8c28') + badge(1448, 322, 'T', '#3c78d2') + bag(1433, 306) + bag(1509, 286);
	s += badge(446, 457, '财', '#003264') + badge(1401, 457, '涨', '#780000') + badge(1417, 457, '预', '#be460a');
	s += line('959,412.5 947,412.5 951,409 947,412.5 951,416', '#c0c0c0', 1) + text(960, 417, '13.20', '#c0c0c0') + text(0, 448, '用到未来数据', '#606060', 'big norm');

	// price axis
	s += line('1563.5,70 1563.5,464', '#b00000', 1) + line('1564,72.5 1614,72.5', '#b00000', 1) + line('1564,230.5 1614,230.5', '#b00000', 1) + line('1557,206.5 1563,206.5', RED, 1) + line('1558,362.5 1563,362.5', GREEN, 1);
	[[86,'16.33','#c0c0c0'],[104,'2616','#c0c000'],[123,'16.32','#c0c0c0'],[142,'849','#c0c000'],[168,'16.33',RED],[186,'▲0.55',RED],[204,'3.49%',RED],[222,'5833','#c0c0c0']].forEach(function(a) { s += text(1613, a[0], a[1], a[2], '', 'end'); });
	['16.00', '15.00', '14.00', '13.00'].forEach(function(t, n) {
		y = Math.round(273 + n * 49.5);
		s += line('1564,' + (y + 0.5) + ' 1569,' + (y + 0.5), '#b00000', 1) + text(1609, y + 5, t, RED, '', 'end');
	});
	document.getElementById('kline').innerHTML = s;
}

var life = '5,622 20,599 35,607 44,616 52,625 56,633 65,651 82,672 96,666 111,700 127,697 142,712 157,748 172,759 188,773 203,766 218,775 234,767 249,769 264,762 279,767 294,773 311,773 325,763 340,761 356,761 371,758 386,752 400,742 416,726 431,709 446,718 461,709 476,724 491,729 506,740 521,756 537,762 552,770 568,770 582,759 597,768 613,768 628,753 643,762 658,755 674,756 688,720 704,697 719,676 734,670 750,660 764,643 780,642 795,651 811,661 826,664 841,648 851,632 857,625 872,626 886,653 901,654 909,676 916,692 931,735 947,746 960,748 990,751 1008,757 1024,735 1040,722 1055,720 1073,720 1098,735 1114,725 1129,708 1145,675 1159,668 1168,632 1174,605 1190,565 1205,571 1220,556 1236,560 1251,587 1266,594 1281,617 1293,632 1328,637 1341,599 1355,601 1372,601 1387,626 1402,561 1417,552 1433,530 1448,550 1463,569 1478,569 1493,561 1509,530';
var fast = '5,619 20,611 35,608 52,608 66,618 82,623 96,626 112,639 127,647 142,657 157,673 172,685 188,697 203,703 218,712 248,724 279,733 310,743 325,744 355,749 378,750 400,744 416,740 431,735 446,736 461,734 476,738 506,744 537,751 568,755 582,755 613,760 643,761 674,759 700,745 735,724 750,715 764,704 780,696 795,692 826,688 841,681 857,673 872,670 886,676 901,680 916,687 931,698 947,707 978,717 1008,724 1024,721 1053,717 1073,716 1083,720 1098,723 1114,721 1129,716 1144,706 1159,700 1174,681 1190,662 1205,650 1220,637 1236,628 1250,626 1267,626 1281,634 1297,639 1311,642 1326,643 1341,636 1357,633 1372,627 1386,629 1402,614 1417,602 1433,592 1448,588 1478,587 1493,582 1509,570';
var slow = '5,626 36,615 55,610 68,610 82,615 112,624 127,634 142,643 157,654 188,681 218,701 248,715 279,726 310,736 340,743 378,748 400,748 430,744 446,740 475,736 500,737 537,744 568,751 613,756 643,759 674,760 706,753 735,736 764,718 780,708 795,700 826,693 857,682 872,676 886,673 901,674 916,678 947,695 978,708 1008,717 1024,721 1053,720 1073,717 1098,718 1114,722 1129,721 1144,717 1174,701 1190,685 1205,670 1236,642 1251,632 1267,630 1281,629 1297,631 1311,635 1341,641 1372,636 1402,627 1433,605 1448,596 1463,592 1478,591 1493,588 1509,581';

function curve(pts) {
	var p = pts.split(' ').map(function(q) { return q.split(',').map(Number); });
	return function(x) {
		for (var i = 1; i < p.length; i++) {
			if (x <= p[i][0]) {
				return p[i-1][1] + (p[i][1] - p[i-1][1]) * (x - p[i-1][0]) / (p[i][0] - p[i-1][0]);
			}
		}
		return p[p.length-1][1];
	};
}
// one vertical stick per pixel, red where a is above b, green where below
function band(a, b) {
	var up = '', dn = '';
	for (var x = 5; x < 1509; x++) {
		var ya = Math.round(a(x)), yb = Math.round(b(x)), d = 'M' + (x + 0.5) + ' ' + ya + 'V' + yb;
		if (ya < yb) { up += d; } else if (ya > yb) { dn += d; }
	}
	return '<path d="' + up + '" stroke="#640000"/><path d="' + dn + '" stroke="#006400"/>';
}
function spike(x) {
	return '<path d="M' + x + ' 720l15 59h-5l-10-21-10 21h-5z" fill="#f00"/>' + rect(x - 13, 778, 27, 2, '#ff8080');
}
function drawFund() {
	var s = '';
	[543, 602, 661, 720, 779, 838].forEach(function(g) {
		s += line('0,' + (g + 0.5) + ' 1563,' + (g + 0.5), GRID, 1, 'stroke-dasharray="1 3"');
	});
	[203, 461, 764, 1114, 1417].forEach(function(x) {
		s += line((x + 0.5) + ',488 ' + (x + 0.5) + ',954', GRID, 1, 'stroke-dasharray="1 3"');
	});
	s += band(curve(life), function() { return 632; }) + band(curve(fast), curve(slow));
	s += line(life, '#5096ff', 1, 'stroke-dasharray="2 1"') + line(fast, '#f00', 1, 'shape-rendering="crispEdges"') + line(slow, '#ff0', 1, 'shape-rendering="crispEdges"');
	s += line('5,484.5 1509,484.5', '#0f0', 1) + line('5,632 1509,632', '#fff', 2) + line('5,779 1509,779', '#f00', 2);
	s += spike(400) + spike(658) + spike(688);
	[689, 1023, 1129].forEach(function(x) { s += tri(x, 761, 15, 17, '#ff8080') + rect(x - 2, 775, 1, 1, '#000') + rect(x + 1, 775, 1, 1, '#000'); });
	s += text(400, 724, '资金流入', '#0f0', 'big norm') + text(658, 724, '资金流入', '#0f0', 'big norm') + text(688, 724, '资金流入', '#0f0', 'big norm');
	s += text(825, 697, '介入', '#ff0', 'norm') + text(1174, 697, '介入', '#ff0', 'norm') + text(1433, 608, '加持', '#f00');
	s += rect(5, 910, 1504, 35, '#500a0a') + rect(5, 909, 24, 37, '#500a0a') + rect(1501, 909, 8, 37, '#500a0a');
	s += line('1564,482 1564,953 1613,953 1613,482', '#b00000', 2);
	[[484,'100.0'],[515,'90.00'],[543,'80.00'],[574,'70.00'],[602,'60.00'],[633,'50.00'],[661,'40.00'],[692,'30.00'],[720,'20.00'],[751,'10.00'],[779,'0.00'],[811,'-10.00'],[839,'-20.00']].forEach(function(a) {
		s += text(1609, a[0] + 4, a[1], RED, '', 'end') + line('1564,' + (a[0] + 0.5) + ' 1568,' + (a[0] + 0.5), '#b00000', 1);
	});
	document.getElementById('fund').innerHTML = s;
}
function drawDates() {
	var s = text(5, 12, '2025年', RED);
	[[203,'10'],[461,'11'],[764,'12'],[1114,'1'],[1417,'2']].forEach(function(d) {
		s += rect(d[0] - 1, 0, 1, 15, '#b00000') + text(d[0] + 1, 12, d[1], RED);
	});
	[267,331,396,537,612,687,851,938,1026,1189,1265,1340].forEach(function(x) { s += rect(x, 0, 1, 3, '#b00000'); });
	document.getElementById('dates').innerHTML = s;
}

var tape = [
['14:55','16.32',134,'B',10],['','16.31',31,'S',3],['','16.32',62,'B',3],['','16.31',63,'S',9],['','16.31',252,'S',27],['','16.31',70,'B',5],
['14:56','16.32',672,'B',51],['','16.30',31,'S',9],['','16.32',54,'B',6],['','16.32',133,'B',31],['','16.31',219,'S',28],['','16.31',97,'B',12],['','16.32',232,'B',21],['','16.31',13,'',5],['','16.31',183,'B',14],['','16.31',331,'B',26],['','16.31',210,'S',21],['','16.31',114,'S',11],['','16.31',290,'S',16],['','16.31',125,'S',17],['','16.32',34,'B',10],['','16.32',152,'B',20],['','16.31',417,'S',21],['','16.31',299,'B',20],['','16.31',75,'S',13],['','16.32',7,'B',4],
['14:57','16.32',7,'B',4],['15:00','16.33',5833,'',452]
];
function drawTape() {
	var s = '';
	tape.forEach(function(t, n) {
		s += '<tr' + (n && t[0] ? ' class="dot"' : '') + '><td>' + t[0] + '</td><td>' + t[1] + '</td><td' + (t[2] > 500 ? ' class="m"' : '') + '>' + t[2] + '</td><td class="' + (t[3] == 'B' ? 'r' : 'g') + '">' + t[3] + '</td><td>' + t[4] + '</td></tr>';
	});
	document.getElementById('tape').innerHTML = s;
}
drawKline();
drawFund();
drawDates();
drawTape();
```
